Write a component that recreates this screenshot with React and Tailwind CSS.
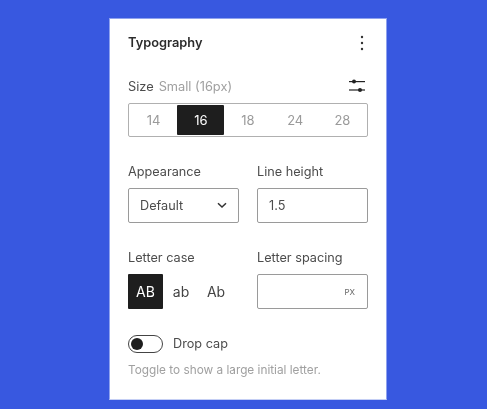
import React from "react";

const sizes = ["14", "16", "18", "24", "28"];

function App() {
  return (
    <div className="w-[487px] h-[409px] overflow-hidden bg-[#3858e0] pt-[18px] pl-[109px] font-['Inter',sans-serif]">
      {/* Panel */}
      <div className="w-[278px] h-[382px] bg-white px-[18px] pt-[15px] border border-[#8fa2ee] border-b-[#c5cff5] blur-[0.3px]">
        {/* Header */}
        <div className="flex items-center justify-between h-[18px]">
          <h1 className="text-[12.8px] leading-[18px] font-semibold text-[#2c2c2c]">Typography</h1>
          <svg width="4" height="16" viewBox="0 0 4 16" className="mr-[4px] text-[#333]" fill="currentColor">
            <circle cx="2" cy="2" r="1.2" />
            <circle cx="2" cy="8" r="1.2" />
            <circle cx="2" cy="14" r="1.2" />
          </svg>
        </div>

        {/* Size */}
        <div className="mt-[25px] flex items-center justify-between h-[18px]">
          <div className="flex items-baseline gap-[5px] pt-[1px]">
            <span className="text-[12.8px] text-[#4c4c4c]">Size</span>
            <span className="text-[12.8px] text-[#a0a0a0]">Small (16px)</span>
          </div>
          <svg width="18" height="16" viewBox="0 0 18 16" className="mr-[2px] text-[#222]" fill="currentColor">
            <rect x="1" y="3" width="16" height="1.2" />
            <circle cx="6" cy="3.6" r="2" />
            <rect x="1" y="11.4" width="16" height="1.2" />
            <circle cx="12" cy="12" r="2" />
          </svg>
        </div>
        <div className="mt-[8px] flex h-[34px] w-[240px] border border-[#b0b0b0] rounded-[2px] p-[1px]">
          {sizes.map((s) => (
            <div
              key={s}
              className={
                s === "16"
                  ? "flex-1 flex items-center justify-center pt-[1px] text-[13px] bg-[#1e1e1e] text-white rounded-[1px]"
                  : "flex-1 flex items-center justify-center pt-[1px] text-[13px] text-[#9a9a9a]"
              }
            >
              {s}
            </div>
          ))}
        </div>

        {/* Appearance / Line height */}
        <div className="mt-[25px] grid grid-cols-[111px_111px] gap-x-[18px]">
          <div>
            <div className="pt-[1px] text-[12.7px] leading-[18px] text-[#4c4c4c]">Appearance</div>
            <div className="mt-[7px] h-[35px] flex items-center justify-between pl-[11px] pr-[11px] border border-[#9a9a9a] rounded-[2px]">
              <span className="pt-[1px] text-[12.7px] text-[#4c4c4c]">Default</span>
              <svg width="10" height="7" viewBox="0 0 10 7" fill="none" stroke="#333" strokeWidth="1.5">
                <path d="M1 1.2 L5 5 L9 1.2" />
              </svg>
            </div>
          </div>
          <div>
            <div className="pt-[1px] text-[12.7px] leading-[18px] text-[#4c4c4c]">Line height</div>
            <div className="mt-[7px] h-[35px] flex items-center pl-[11px] pt-[1px] border border-[#9a9a9a] rounded-[2px] text-[12.7px] text-[#4c4c4c]">
              1.5
            </div>
          </div>
        </div>

        {/* Letter case / Letter spacing */}
        <div className="mt-[25px] grid grid-cols-[111px_111px] gap-x-[18px]">
          <div>
            <div className="pt-[1px] text-[12.7px] leading-[18px] text-[#4c4c4c]">Letter case</div>
            <div className="mt-[7px] flex h-[35px] items-center">
              <div className="w-[35px] h-[35px] flex items-center justify-center bg-[#1e1e1e] text-white text-[14px] rounded-[1px]">
                AB
              </div>
              <div className="w-[36px] text-center text-[14px] text-[#444]">ab</div>
              <div className="w-[34px] text-center text-[14px] text-[#444]">Ab</div>
            </div>
          </div>
          <div>
            <div className="pt-[1px] text-[12.7px] leading-[18px] text-[#4c4c4c]">Letter spacing</div>
            <div className="mt-[7px] h-[35px] flex items-center justify-end pr-[12px] border border-[#9a9a9a] rounded-[2px] text-[8px] text-[#666]">
              PX
            </div>
          </div>
        </div>

        {/* Drop cap */}
        <div className="mt-[25px] flex items-center gap-[10px]">
          <div className="w-[35px] h-[18px] rounded-full border border-[#444] flex items-center pl-[2px]">
            <div className="w-[12px] h-[12px] rounded-full bg-[#1e1e1e]" />
          </div>
          <span className="text-[12.7px] text-[#4c4c4c]">Drop cap</span>
        </div>
        <p className="mt-[9px] text-[11.8px] leading-[16px] text-[#a0a0a0]">Toggle to show a large initial letter.</p>
      </div>
    </div>
  );
}

export default App;
